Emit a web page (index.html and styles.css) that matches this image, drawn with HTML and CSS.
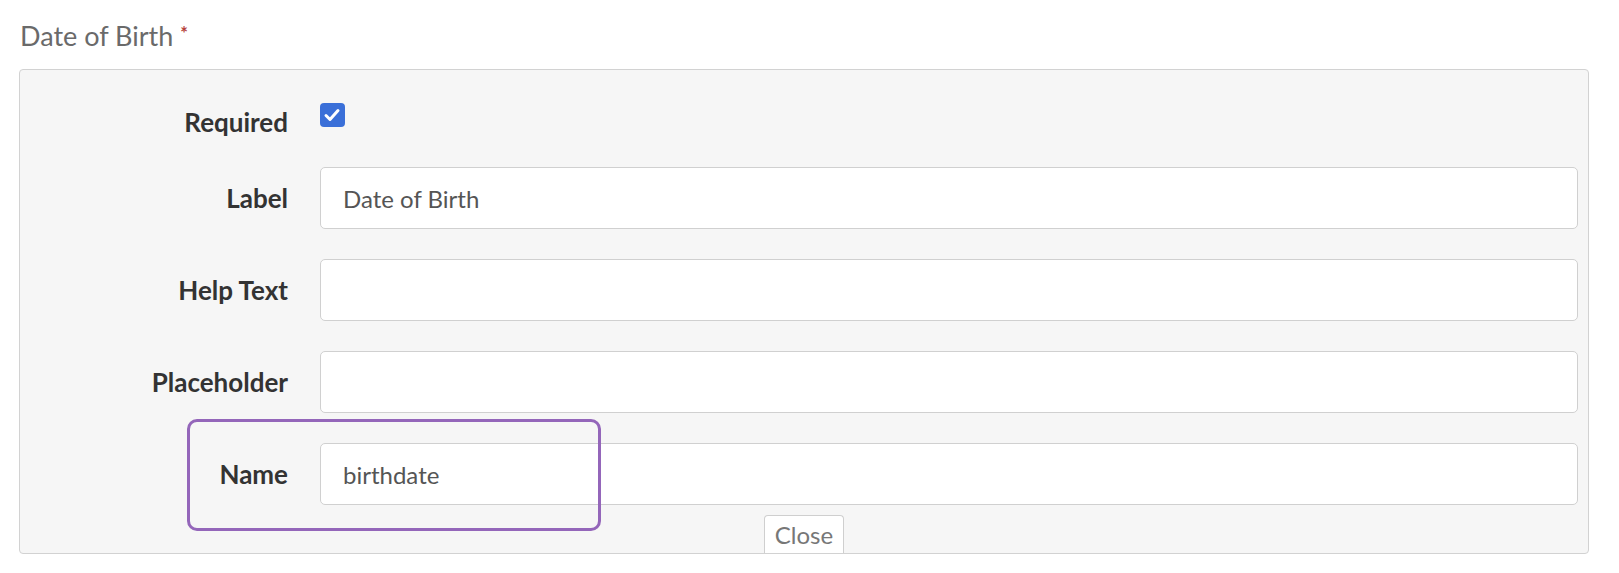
FILE: index.html
```html
<!DOCTYPE html>
<html>
<head>
<meta charset="utf-8">
<link rel="stylesheet" href="styles.css">
</head>
<body>
<div class="title">Date of Birth <span class="req">*</span></div>
<div class="panel">
  <div class="row row-check">
    <div class="lbl lbl-check">Required</div>
    <div class="ctl"><span class="checkbox"><svg viewBox="0 0 24 24" width="24" height="24"><path d="M6 12.5l4 4 8-9" fill="none" stroke="#fff" stroke-width="3" stroke-linecap="round" stroke-linejoin="round"/></svg></span></div>
  </div>
  <div class="row">
    <div class="lbl">Label</div>
    <div class="ctl"><div class="input">Date of Birth</div></div>
  </div>
  <div class="row">
    <div class="lbl">Help Text</div>
    <div class="ctl"><div class="input"></div></div>
  </div>
  <div class="row">
    <div class="lbl">Placeholder</div>
    <div class="ctl"><div class="input"></div></div>
  </div>
  <div class="row">
    <div class="lbl">Name</div>
    <div class="ctl"><div class="input">birthdate</div></div>
  </div>
  <div class="tabwrap"><div class="tab">Close</div></div>
  <div class="highlight"></div>
</div>
</body>
</html>
```
FILE: styles.css
```css
* { box-sizing: border-box; }
html, body { margin: 0; padding: 0; background: #fff; }
body {
  font-family: Lato, "Open Sans", sans-serif;
  width: 1619px;
  height: 573px;
  overflow: hidden;
}
.title {
  height: 69px;
  padding: 16px 0 0 20px;
  font-size: 27px;
  line-height: 34px;
  color: #6a6a6a;
}
.req {
  color: #b5413a;
  font-size: 18px;
  vertical-align: 6px;
  font-weight: bold;
}
.panel {
  position: relative;
  margin-left: 19px;
  width: 1570px;
  height: 485px;
  border: 1.5px solid #d2d2d2;
  border-radius: 4px;
  background: #f6f6f6;
  padding: 33px 10px 0 0;
  display: flex;
  flex-direction: column;
}
.row {
  display: flex;
  align-items: center;
  height: 62px;
  margin-top: 30px;
}
.row-check {
  height: 24px;
  margin-top: 0;
  margin-bottom: 10px;
  align-items: flex-start;
}
.lbl {
  width: 268px;
  flex: none;
  text-align: right;
  font-weight: bold;
  font-size: 26px;
  color: #333;
}
.lbl-check { line-height: 24px; margin-top: 7px; }
.ctl {
  flex: 1;
  margin-left: 32px;
}
.checkbox {
  display: block;
  width: 25px;
  height: 24px;
  border-radius: 4px;
  background: #3a6fd8;
}
.checkbox svg { display: block; }
.input {
  height: 62px;
  background: #fff;
  border: 1.5px solid #d0d0d0;
  border-radius: 5px;
  padding: 0 22px;
  display: flex;
  align-items: center;
  font-size: 24px;
  color: #555;
}
.tabwrap {
  display: flex;
  justify-content: center;
  margin-top: 10px;
  padding-left: 10px;
}
.tab {
  width: 80px;
  height: 38px;
  margin-bottom: -2px;
  background: #fff;
  border: 1.5px solid #cfcfcf;
  border-bottom: none;
  border-radius: 4px 4px 0 0;
  font-size: 24px;
  color: #777;
  text-align: center;
  line-height: 38px;
}
.highlight {
  position: absolute;
  left: 167px;
  top: 349px;
  width: 414px;
  height: 112px;
  border: 3px solid #9466ba;
  border-radius: 10px;
}
```
